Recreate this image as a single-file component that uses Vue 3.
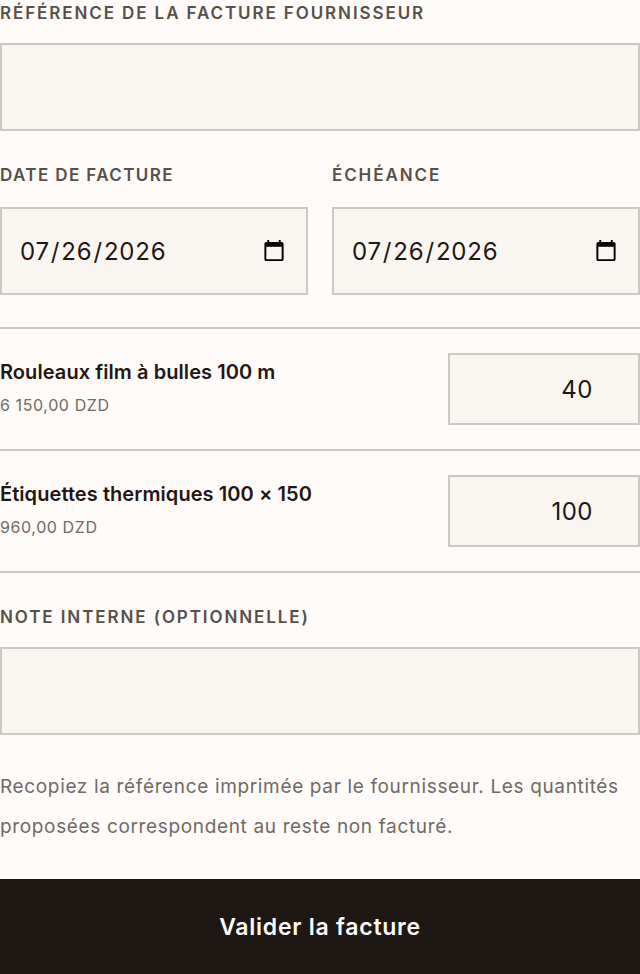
<template>
  <form class="invoice" @submit.prevent>
    <div class="field first">
      <label class="label">RÉFÉRENCE DE LA FACTURE FOURNISSEUR</label>
      <input v-model="reference" class="input tall" type="text">
    </div>

    <div class="dates">
      <div class="field">
        <label class="label narrow">DATE DE FACTURE</label>
        <input v-model="invoiceDate" class="input tall date" type="date">
      </div>
      <div class="field">
        <label class="label">ÉCHÉANCE</label>
        <input v-model="dueDate" class="input tall date" type="date">
      </div>
    </div>

    <ul class="lines">
      <li v-for="line in lines" :key="line.name" class="line">
        <div class="line-info">
          <div class="line-name">{{ line.name }}</div>
          <div class="line-price">{{ line.price }}</div>
        </div>
        <input v-model="line.qty" class="input qty" type="number">
      </li>
    </ul>

    <div class="field note">
      <label class="label">NOTE INTERNE (OPTIONNELLE)</label>
      <textarea v-model="note" class="input tall"></textarea>
    </div>

    <p class="help">Recopiez la référence imprimée par le fournisseur. Les quantités proposées correspondent au reste non facturé.</p>

    <button class="submit" type="submit">Valider la facture</button>
  </form>
</template>

<script setup>
import { ref } from 'vue'

const reference = ref('')
const invoiceDate = ref('2026-07-26')
const dueDate = ref('2026-07-26')
const note = ref('')
const lines = ref([
  { name: 'Rouleaux film à bulles 100 m', price: '6 150,00 DZD', qty: 40 },
  { name: 'Étiquettes thermiques 100 × 150', price: '960,00 DZD', qty: 100 }
])
</script>

<style>
html, body {
  margin: 0;
  background: #fffbf9;
}
</style>

<style scoped>
.invoice {
  display: flex;
  flex-direction: column;
  padding-top: 3px;
  font-family: Inter, "Liberation Sans", sans-serif;
  color: #1f1714;
}
.field {
  display: flex;
  flex-direction: column;
  min-width: 0;
}
.label {
  height: 20px;
  margin-bottom: 22px;
  font-size: 17px;
  line-height: 20px;
  font-weight: 600;
  letter-spacing: 1.9px;
  color: #56504b;
  white-space: nowrap;
}
.label.narrow {
  letter-spacing: 1.4px;
}
.first .label {
  margin-bottom: 20px;
}
.input {
  box-sizing: border-box;
  width: 100%;
  border: 2px solid #d2c6c2;
  border-radius: 0;
  background: #f9f5f0;
  padding: 0 18px;
  margin: 0;
  font-family: inherit;
  font-size: 24px;
  color: #1f1714;
  outline: none;
  display: block;
  resize: none;
}
.tall {
  height: 88px;
}
.date {
  padding-left: 17px;
  letter-spacing: 0.8px;
}
.dates {
  display: grid;
  grid-template-columns: 1fr 1fr;
  gap: 24px;
  margin-top: 34px;
}
.lines {
  list-style: none;
  margin: 32px 0 0;
  padding: 0;
  border-top: 2px solid #d2c6c2;
}
.line {
  display: flex;
  justify-content: space-between;
  padding: 24px 0;
  border-bottom: 2px solid #d2c6c2;
}
.line-info {
  padding-top: 7px;
}
.line-name {
  font-size: 20px;
  line-height: 24px;
  font-weight: 600;
  letter-spacing: 0.07px;
  color: #1f1714;
}
.line-price {
  margin-top: 11px;
  font-size: 16px;
  line-height: 20px;
  letter-spacing: 0.6px;
  color: #6f6a66;
}
.qty {
  flex: none;
  width: 192px;
  height: 72px;
  padding-right: 30px;
  text-align: right;
  letter-spacing: 0.5px;
}
.note {
  margin-top: 34px;
}
.note .label {
  margin-bottom: 20px;
}
.help {
  margin: 32px 0 0;
  font-size: 19px;
  line-height: 40px;
  letter-spacing: 0.65px;
  color: #6f6a66;
}
.submit {
  margin-top: 32px;
  height: 95px;
  border: 0;
  background: #1f1714;
  color: #fffbf9;
  font-family: inherit;
  font-size: 23px;
  font-weight: 600;
  letter-spacing: 0.75px;
}
</style>
